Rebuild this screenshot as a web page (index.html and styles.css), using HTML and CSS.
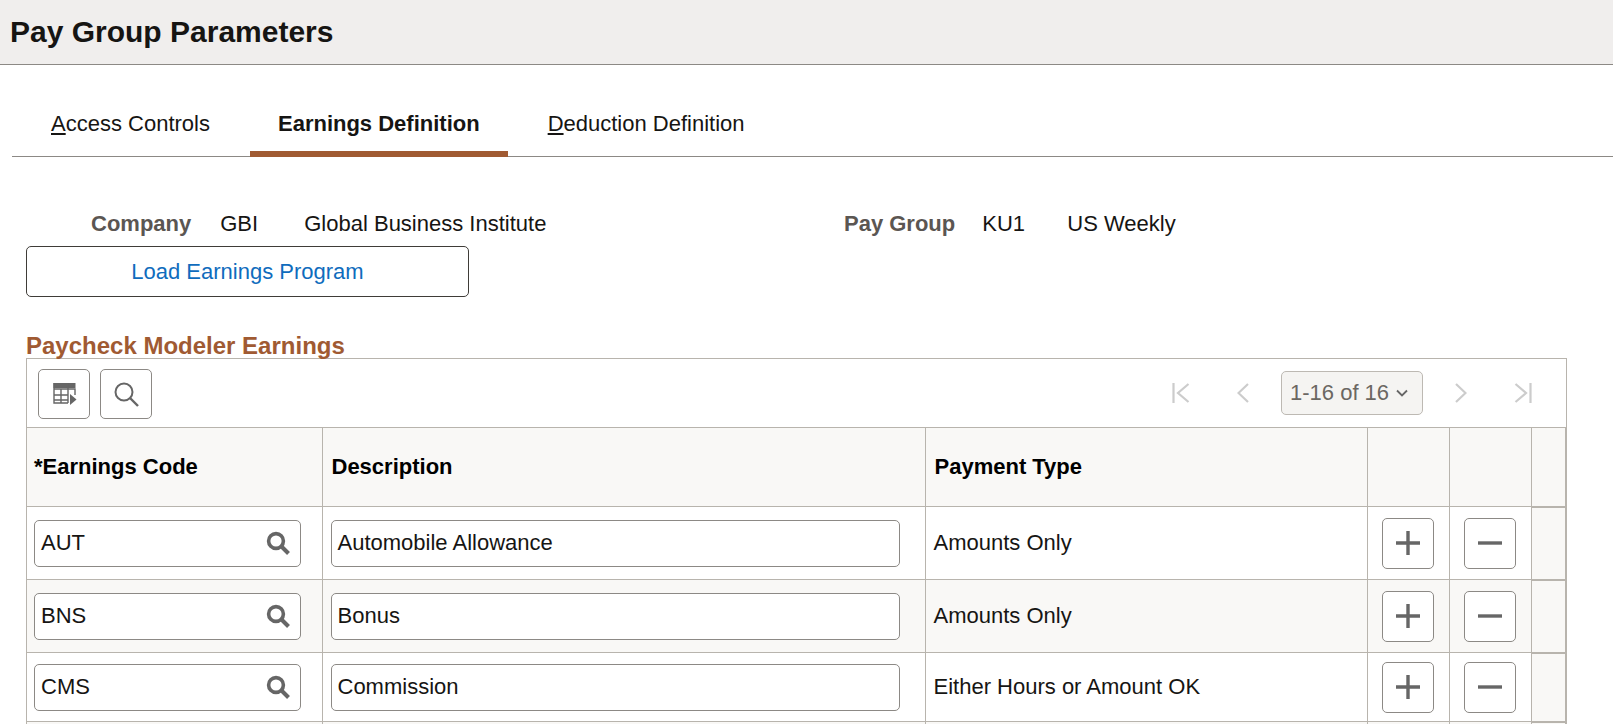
FILE: index.html
```html
<!DOCTYPE html>
<html lang="en">
<head>
<meta charset="utf-8">
<title>Pay Group Parameters</title>
<link rel="stylesheet" href="styles.css">
</head>
<body>
<svg class="defs" width="0" height="0" aria-hidden="true">
  <symbol id="i-search" viewBox="0 0 24 24"><circle cx="10" cy="10" r="7.400" fill="none" stroke="currentColor" stroke-width="3.600"/><path d="M15.500 15.500 22.500 22.500" fill="none" stroke="currentColor" stroke-width="4"/></symbol>
  <symbol id="i-find" viewBox="0 0 26 26"><circle cx="11" cy="11" r="8.500" fill="none" stroke="currentColor" stroke-width="2"/><path d="M17 17 25 25" fill="none" stroke="currentColor" stroke-width="2.400"/></symbol>
  <symbol id="i-plus" viewBox="0 0 26 26"><path d="M13 1v24M1 13h24" fill="none" stroke="currentColor" stroke-width="3.400"/></symbol>
  <symbol id="i-minus" viewBox="0 0 26 26"><path d="M1 13h24" fill="none" stroke="currentColor" stroke-width="3.400"/></symbol>
</svg>
<header class="page-head"><h1>Pay Group Parameters</h1></header>
<nav class="tabs">
  <a class="tab"><u>A</u>ccess Controls</a>
  <a class="tab active">Earnings Definition</a>
  <a class="tab"><u>D</u>eduction Definition</a>
</nav>
<section class="summary">
  <div class="pair first">
    <span class="lbl">Company</span><span class="val code">GBI</span><span class="val">Global Business Institute</span>
  </div>
  <div class="pair second">
    <span class="lbl">Pay Group</span><span class="val code2">KU1</span><span class="val">US Weekly</span>
  </div>
</section>
<button class="load" type="button">Load Earnings Program</button>
<h2 class="grid-title">Paycheck Modeler Earnings</h2>
<div class="grid">
  <div class="toolbar">
    <button class="tool" type="button" aria-label="Personalize">
      <svg width="25" height="25" viewBox="0 0 25 25"><path d="M1.500 1h22v5h-22z" fill="#666"/><path d="M2 1v20h14M2 7h21v6M2 13h14M2 18h14M9 7v14M16 1v20" fill="none" stroke="#666" stroke-width="1.400"/><path d="M18 12l6.500 5.500-6.500 5.500z" fill="#666" /></svg>
    </button>
    <button class="tool" type="button" aria-label="Find">
      <svg class="find" width="26" height="26"><use href="#i-find"/></svg>
    </button>
    <div class="pager">
      <svg class="pg first-i" width="18" height="20" viewBox="0 0 18 20"><path d="M1.500 0v20M16.500 1 6 10l10.500 9" fill="none" stroke="#ccc" stroke-width="2.200"/></svg>
      <svg class="pg prev-i" width="12" height="20" viewBox="0 0 12 20"><path d="M11 1 1.500 10 11 19" fill="none" stroke="#ccc" stroke-width="2.200"/></svg>
      <div class="range"><span>1-16 of 16</span><svg width="12" height="8" viewBox="0 0 12 8"><path d="M1 1.500 6 6.500 11 1.500" fill="none" stroke="#666" stroke-width="1.800"/></svg></div>
      <svg class="pg next-i" width="12" height="20" viewBox="0 0 12 20"><path d="M1 1 10.500 10 1 19" fill="none" stroke="#ccc" stroke-width="2.200"/></svg>
      <svg class="pg last-i" width="18" height="20" viewBox="0 0 18 20"><path d="M16.500 0v20M1.500 1 12 10 1.500 19" fill="none" stroke="#ccc" stroke-width="2.200"/></svg>
    </div>
  </div>
  <table>
    <colgroup><col class="c1"><col class="c2"><col class="c3"><col class="c4"><col class="c5"><col class="c6"></colgroup>
    <thead><tr><th>*Earnings Code</th><th>Description</th><th>Payment Type</th><th></th><th></th><th class="end"></th></tr></thead>
    <tbody>
      <tr class="r1">
        <td><div class="input code-in"><span>AUT</span><svg width="24" height="24"><use href="#i-search"/></svg></div></td>
        <td><div class="input desc-in"><span>Automobile Allowance</span></div></td>
        <td class="pay">Amounts Only</td>
        <td><button class="act" type="button" aria-label="Add"><svg width="26" height="26"><use href="#i-plus"/></svg></button></td>
        <td><button class="act" type="button" aria-label="Delete"><svg width="26" height="26"><use href="#i-minus"/></svg></button></td>
        <td class="end"></td>
      </tr>
      <tr class="r2">
        <td><div class="input code-in"><span>BNS</span><svg width="24" height="24"><use href="#i-search"/></svg></div></td>
        <td><div class="input desc-in"><span>Bonus</span></div></td>
        <td class="pay">Amounts Only</td>
        <td><button class="act" type="button" aria-label="Add"><svg width="26" height="26"><use href="#i-plus"/></svg></button></td>
        <td><button class="act" type="button" aria-label="Delete"><svg width="26" height="26"><use href="#i-minus"/></svg></button></td>
        <td class="end"></td>
      </tr>
      <tr class="r3">
        <td><div class="input code-in"><span>CMS</span><svg width="24" height="24"><use href="#i-search"/></svg></div></td>
        <td><div class="input desc-in"><span>Commission</span></div></td>
        <td class="pay">Either Hours or Amount OK</td>
        <td><button class="act" type="button" aria-label="Add"><svg width="26" height="26"><use href="#i-plus"/></svg></button></td>
        <td><button class="act" type="button" aria-label="Delete"><svg width="26" height="26"><use href="#i-minus"/></svg></button></td>
        <td class="end"></td>
      </tr>
      <tr class="r4"><td></td><td></td><td></td><td></td><td></td><td class="end"></td></tr>
    </tbody>
  </table>
</div>
</body>
</html>
```

FILE: styles.css
```css
* { box-sizing: border-box; }
html, body { margin: 0; padding: 0; height: 724px; overflow: hidden; background: #fff; }
body { font-family: "Liberation Sans", Arial, sans-serif; font-size: 22px; color: #000; }
.defs { position: absolute; }

.page-head { height: 65px; background: #f0eeed; border-bottom: 1px solid #8c8985; padding-left: 10px; display: flex; align-items: center; }
.page-head h1 { margin: 0; font-size: 30px; font-weight: 700; color: #161513; }

.tabs { margin: 0 0 0 12px; height: 92px; border-bottom: 1px solid #8c8985; display: flex; align-items: flex-end; padding-left: 11px; gap: 12px; }
.tab { height: 91px; padding: 41px 28px 0; font-size: 22px; line-height: 35px; color: #161513; white-space: nowrap; }
.tab.active { height: 92px; margin-bottom: -1px; font-weight: 700; border-bottom: 6px solid #a05a32; }

.summary { margin-top: 52px; height: 29px; display: flex; line-height: 29px; }
.pair { display: flex; }
.pair.first { width: 844px; padding-left: 91px; }
.lbl { font-weight: 700; color: #5b5652; }
.val { color: #161513; }
.code { margin-left: 29px; width: 84px; }
.code2 { margin-left: 27px; width: 85px; }

.load { display: block; margin: 8px 0 0 26px; width: 443px; height: 51px; background: #fff; border: 1px solid #3f3c38; border-radius: 5px; font: 22px "Liberation Sans", Arial, sans-serif; color: #0f6cbd; }

.grid-title { margin: 36px 0 0 26px; height: 25px; font-size: 24px; line-height: 26px; font-weight: 700; color: #a05a32; }

.grid { margin-left: 26px; width: 1541px; border: 1px solid #b8b4ad; border-bottom: 0; }
.toolbar { height: 68px; display: flex; align-items: flex-start; gap: 10px; padding: 10px 0 0 11px; }
.tool { width: 52px; height: 50px; padding: 0; background: #fff; border: 1px solid #8c8985; border-radius: 5px; display: flex; align-items: center; justify-content: center; color: #666; }
.find { color: #666; }
.pager { margin-left: auto; display: flex; align-items: center; height: 44px; margin-top: 2px; padding-right: 34px; }
.pg { flex: none; }
.prev-i { margin-left: 47px; }
.range { margin-left: 32px; width: 142px; height: 44px; background: #f5f4f2; border: 1px solid #bdb9b3; border-radius: 5px; display: flex; align-items: center; justify-content: space-between; padding: 0 14px 0 8px; color: #6b6762; }
.next-i { margin-left: 32px; }
.last-i { margin-left: 47px; }

table { width: 1539px; border-collapse: collapse; table-layout: fixed; }
.c1 { width: 295px; }
.c2 { width: 603px; }
.c3 { width: 442px; }
.c4, .c5 { width: 82px; }
.c6 { width: 35px; }
th, td { border: 1px solid #b8b4ad; padding: 0; vertical-align: middle; }
tr > :first-child { border-left: 0; }
tr > :last-child { border-right: 0; }
thead th { height: 79px; background: #f9f8f6; text-align: left; font-size: 22px; font-weight: 700; padding-left: 9px; }
thead th:first-child { padding-left: 7px; }
.r1 td { height: 73px; }
.r2 td { height: 73px; background: #f9f8f6; }
.r3 td { height: 69px; }
.r4 td { height: 20px; background: #f9f8f6; }
td.end { background: #f9f8f6; border-top-width: 2px; border-right: 2px solid #b8b4ad; }
th.end { border-right: 2px solid #b8b4ad; }
.pay { padding-left: 8px; color: #161513; }

.input { height: 47px; background: #fff; border: 1px solid #8c8985; border-radius: 5px; display: flex; align-items: center; justify-content: space-between; padding: 0 10px 0 6px; color: #161513; }
.input svg { color: #666; flex: none; }
.code-in { width: 267px; margin-left: 7px; }
.desc-in { width: 569px; margin-left: 8px; }

.act { display: flex; align-items: center; justify-content: center; width: 52px; height: 51px; margin-left: 14px; padding: 0; background: #fff; border: 1px solid #8c8985; border-radius: 5px; color: #666; }
```
